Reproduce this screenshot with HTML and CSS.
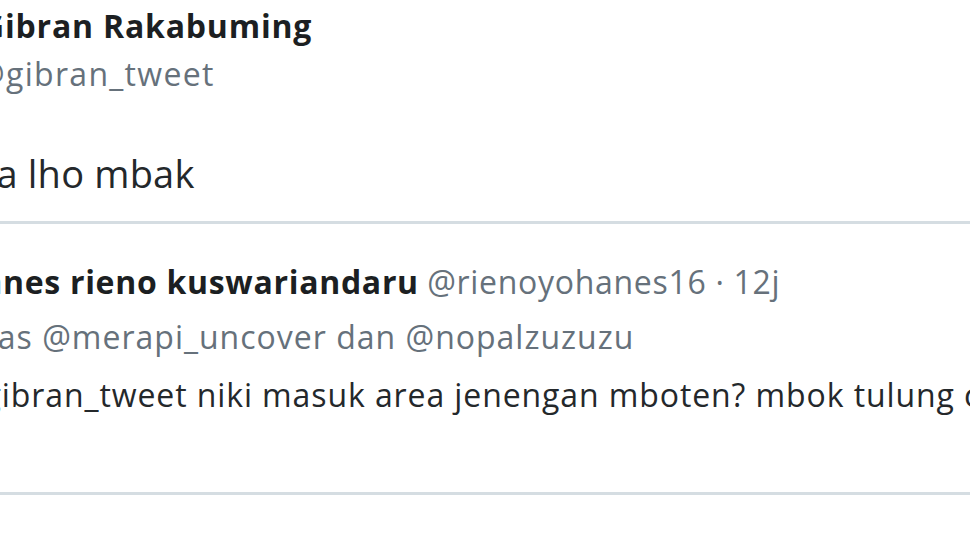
FILE: index.html
```html
<!DOCTYPE html>
<html lang="id">
<head>
<meta charset="utf-8">
<title>Tweet</title>
<link rel="stylesheet" href="styles.css">
</head>
<body>
<main class="page">
  <section class="tweet">
    <header class="author">
      <div class="name line cut-name">Gibran Rakabuming</div>
      <div class="handle line cut-handle">@gibran_tweet</div>
    </header>
    <p class="text line cut-text">Ya lho mbak</p>
  </section>
  <section class="reply">
    <div class="reply-head line cut-rname"><span class="rname">Yohanes rieno kuswariandaru</span> <span class="meta">@rienoyohanes16 · 12j</span></div>
    <div class="reply-to line cut-rto">Membalas <span>@merapi_uncover</span> dan <span>@nopalzuzuzu</span></div>
    <p class="reply-text line cut-rtext">@gibran_tweet niki masuk area jenengan mboten? mbok tulung cek</p>
  </section>
</main>
</body>
</html>
```
FILE: styles.css
```css
html, body {
  margin: 0;
  padding: 0;
  background: #ffffff;
}
body {
  width: 970px;
  height: 545px;
  overflow: hidden;
  font-family: "Open Sans", "Noto Sans", sans-serif;
  color: #1f2326;
}
.page {
  display: flex;
  flex-direction: column;
}
.line {
  white-space: nowrap;
  margin-top: 0;
  margin-bottom: 0;
}
.tweet {
  display: flex;
  flex-direction: column;
  border-bottom: 3px solid #d5dde2;
  padding-bottom: 22px;
}
.author {
  display: flex;
  flex-direction: column;
  padding-top: 4px;
}
.name {
  font-weight: 700;
  font-size: 32px;
  line-height: 44px;
  letter-spacing: 0.8px;
  color: #1c1f22;
}
.handle {
  font-size: 32px;
  line-height: 44px;
  letter-spacing: 1.3px;
  margin-top: 4px;
  color: #66717b;
}
.text {
  font-size: 38px;
  line-height: 52px;
  letter-spacing: 0.2px;
  margin-top: 51px;
  color: #24282b;
}
.reply {
  display: flex;
  flex-direction: column;
  padding-top: 36px;
  padding-bottom: 75px;
  border-bottom: 3px solid #d5dde2;
}
.reply-head {
  font-size: 32px;
  line-height: 44px;
}
.rname {
  font-weight: 700;
  letter-spacing: 0.7px;
  color: #1c1f22;
}
.meta {
  letter-spacing: 0.7px;
  color: #66717b;
}
.reply-to {
  font-size: 32px;
  line-height: 44px;
  letter-spacing: 1px;
  margin-top: 11px;
  color: #66717b;
}
.reply-text {
  font-size: 32px;
  line-height: 44px;
  letter-spacing: 0.9px;
  margin-top: 14px;
  color: #24282b;
}
.cut-name { margin-left: -19px; }
.cut-handle { margin-left: -24px; }
.cut-text { margin-left: -25px; }
.cut-rname { margin-left: -80px; }
.cut-rto { margin-left: -130px; }
.cut-rtext { margin-left: -46px; }
```
